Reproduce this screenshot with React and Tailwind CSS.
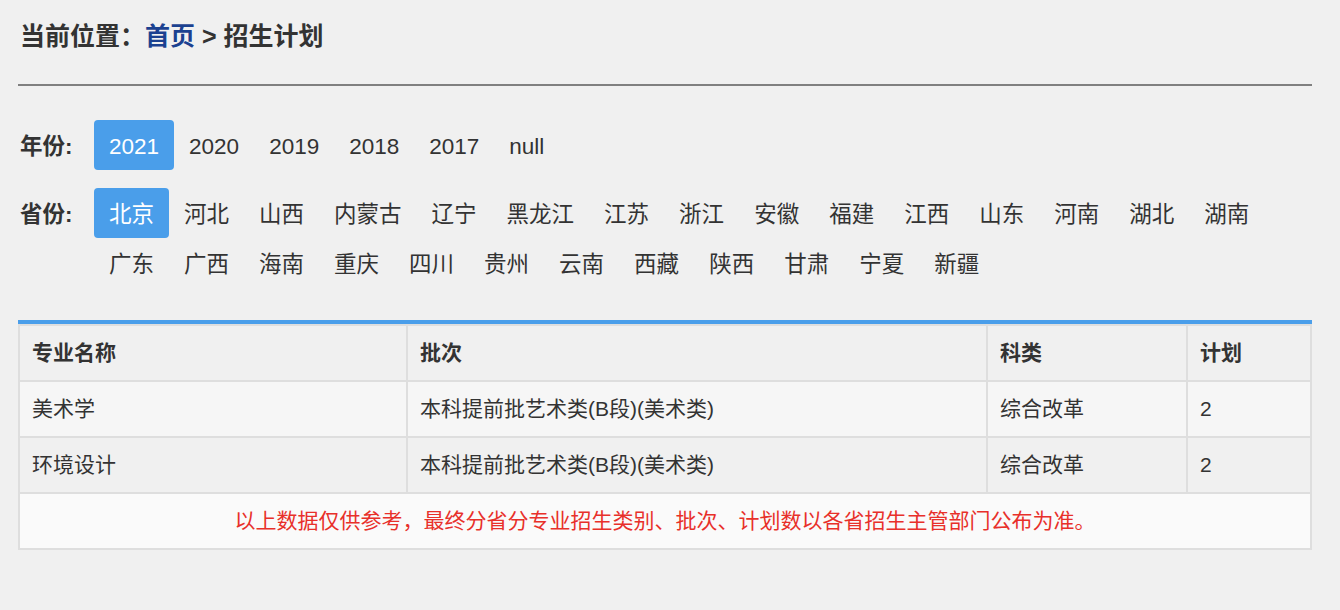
import React from "react";

const years = ["2021", "2020", "2019", "2018", "2017", "null"];

const provinces = [
  "北京", "河北", "山西", "内蒙古", "辽宁", "黑龙江", "江苏", "浙江", "安徽", "福建",
  "江西", "山东", "河南", "湖北", "湖南", "广东", "广西", "海南", "重庆", "四川",
  "贵州", "云南", "西藏", "陕西", "甘肃", "宁夏", "新疆"
];

const rows = [
  { name: "美术学", batch: "本科提前批艺术类(B段)(美术类)", type: "综合改革", plan: "2", bg: "bg-[#f6f6f6]" },
  { name: "环境设计", batch: "本科提前批艺术类(B段)(美术类)", type: "综合改革", plan: "2", bg: "bg-[#f0f0f0]" }
];

const font = {
  fontFamily: '"Helvetica Neue", Helvetica, "Liberation Sans", "Noto Sans CJK SC", sans-serif'
};

function FilterRow({ label, items, active, className }) {
  return (
    <div className={"flex items-start " + (className || "")}>
      <div className="w-[76px] shrink-0 h-[50px] pt-[4px] leading-[46px] text-[22.5px] font-bold text-[#333] pl-[2px]">
        {label}
      </div>
      <div className="flex flex-wrap flex-1">
        {items.map(it => (
          <span
            key={it}
            className={
              it === active
                ? "h-[50px] pt-[4px] leading-[46px] px-[15px] text-[22.5px] rounded-[4px] bg-[#4a9eea] text-white"
                : "h-[50px] pt-[4px] leading-[46px] px-[15px] text-[22.5px] text-[#333]"
            }
          >
            {it}
          </span>
        ))}
      </div>
    </div>
  );
}

export default function App() {
  return (
    <div className="min-h-[610px] bg-[#f0f0f0] pl-[18px] pr-[28px] pt-[18px] text-[#333]" style={font}>

      {/* breadcrumb */}
      <div className="h-[36px] leading-[36px] text-[25px] font-bold text-[#333] pl-[2px]">
        当前位置：<span className="text-[#1b4190]">首页</span> &gt; 招生计划
      </div>

      <div className="mt-[30px] h-[2px] bg-[#808080]" />

      {/* filters */}
      <FilterRow label="年份:" items={years} active="2021" className="mt-[34px]" />
      <FilterRow label="省份:" items={provinces} active="北京" className="mt-[18px]" />

      {/* table */}
      <div className="mt-[32px] border-t-4 border-[#4a9eea]">
        <table className="w-full table-fixed border-collapse border-2 border-[#dedede] text-[21px]">
          <colgroup>
            <col className="w-[388px]" />
            <col className="w-[580px]" />
            <col className="w-[200px]" />
            <col />
          </colgroup>
          <thead>
            <tr className="bg-[#f0f0f0] h-[56px]">
              <th className="text-left font-bold px-[12px] border-2 border-[#dedede]">专业名称</th>
              <th className="text-left font-bold px-[12px] border-2 border-[#dedede]">批次</th>
              <th className="text-left font-bold px-[12px] border-2 border-[#dedede]">科类</th>
              <th className="text-left font-bold px-[12px] border-2 border-[#dedede]">计划</th>
            </tr>
          </thead>
          <tbody>
            {rows.map(r => (
              <tr key={r.name} className={r.bg + " h-[56px]"}>
                <td className="px-[12px] border-2 border-[#dedede]">{r.name}</td>
                <td className="px-[12px] border-2 border-[#dedede]">{r.batch}</td>
                <td className="px-[12px] border-2 border-[#dedede]">{r.type}</td>
                <td className="px-[12px] border-2 border-[#dedede]">{r.plan}</td>
              </tr>
            ))}
            <tr className="bg-[#fafafa] h-[56px]">
              <td colSpan={4} className="text-center text-[#e8302a] border-2 border-[#dedede]">
                以上数据仅供参考，最终分省分专业招生类别、批次、计划数以各省招生主管部门公布为准。
              </td>
            </tr>
          </tbody>
        </table>
      </div>

    </div>
  );
}
